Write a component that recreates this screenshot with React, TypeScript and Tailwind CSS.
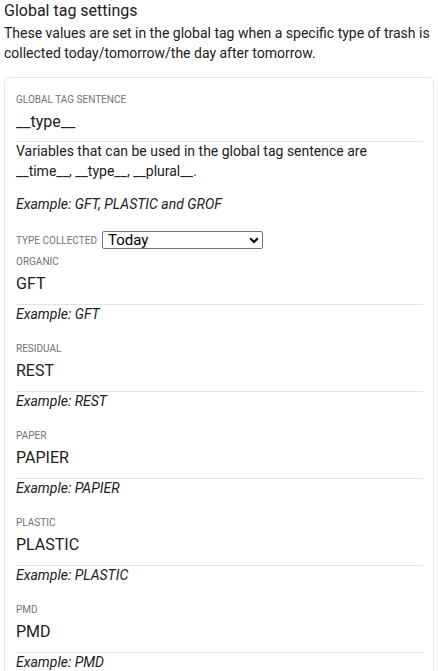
const font = { fontFamily: "Roboto, 'Noto Sans', sans-serif" };

interface TagRow {
  label: string;
  value: string;
}

const rows: TagRow[] = [
  { label: "Organic", value: "GFT" },
  { label: "Residual", value: "REST" },
  { label: "Paper", value: "PAPIER" },
  { label: "Plastic", value: "PLASTIC" },
  { label: "PMD", value: "PMD" },
];

const Label = ({ children }: { children: React.ReactNode }) => (
  <div className="text-[10px] leading-[12px] uppercase text-[#737373]">{children}</div>
);

const Field = ({ label, value }: TagRow) => (
  <div className="flex flex-col">
    <Label>{label}</Label>
    <div className="mt-1 pb-2 text-[16px] leading-6 text-[#212121] border-b border-[#e3e3e3]">
      {value}
    </div>
    <div className="text-[14px] leading-[18px] italic text-[#212121]">Example: {value}</div>
  </div>
);

export default function App() {
  return (
    <div className="min-h-screen bg-white px-1 text-[#212121]" style={font}>
      <h2 className="pt-px text-[16px] leading-5 font-normal">Global tag settings</h2>
      <p className="mt-[2px] text-[14px] leading-5">
        These values are set in the global tag when a specific type of trash is collected
        today/tomorrow/the day after tomorrow.
      </p>

      <div className="mt-[14px] rounded-[6px] border border-[#e6e6e6] pl-[11px] pr-[10px] pt-4 pb-6">
        <Label>Global tag sentence</Label>
        <div className="mt-1 pb-[7px] text-[16px] leading-6 border-b border-[#e3e3e3]">__type__</div>
        <p className="-mt-px text-[14px] leading-5">
          Variables that can be used in the global tag sentence are __time__, __type__,
          __plural__.
        </p>
        <p className="mt-[13px] text-[14px] leading-5 italic">Example: GFT, PLASTIC and GROF</p>

        <div className="mt-[17px] flex h-[18px] items-center gap-[5px]">
          <span className="text-[10px] leading-[12px] uppercase text-[#737373] pt-[2px]">
            Type collected
          </span>
          <div className="relative h-[18px]">
            <select
              defaultValue="today"
              className="block w-[161px] h-[18px] appearance-none rounded-[2px] border border-[#767676] bg-white pl-[5px] py-0 text-[15px] leading-4 text-black outline-none"
            >
              <option value="today">Today</option>
              <option value="tomorrow">Tomorrow</option>
              <option value="dayafter">Day after tomorrow</option>
            </select>
            <svg
              className="pointer-events-none absolute right-[4px] top-[6px]"
              width="10"
              height="7"
              viewBox="0 0 10 7"
              fill="none"
            >
              <path d="M1.2 1.2 L5 5 L8.8 1.2" stroke="#000" strokeWidth="2.2" />
            </svg>
          </div>
        </div>

        <div className="mt-[7px] flex flex-col gap-5">
          {rows.map((r) => (
            <Field key={r.label} {...r} />
          ))}
        </div>
      </div>
    </div>
  );
}
